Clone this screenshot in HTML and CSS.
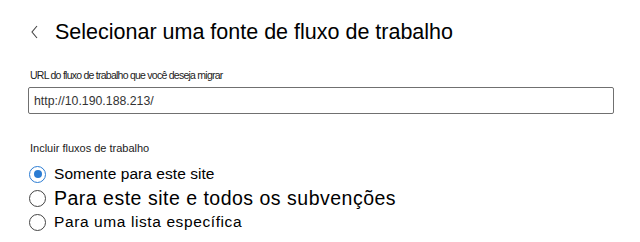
FILE: index.html
```html
<!DOCTYPE html>
<html lang="pt">

<head>
    <meta charset="UTF-8">
    <title>Selecionar uma fonte de fluxo de trabalho</title>
    <link rel="stylesheet" href="styles.css">
</head>

<body>
    <header class="page-header">
        <span class="back-icon">
            <svg width="8" height="14" viewBox="0 0 8 14">
                <path d="M6 1 L1 7 L6 13" fill="none" stroke="#444" stroke-width="1.1"/>
            </svg>
        </span>
        <h1>Selecionar uma fonte de fluxo de trabalho</h1>
    </header>

    <div class="field">
        <label class="field-label url-label" for="urlInput">URL do fluxo de trabalho que você deseja migrar</label>
        <input type="text" id="urlInput" class="url-input" value="http://10.190.188.213/">
    </div>

    <div class="field options">
        <div class="field-label group-label">Incluir fluxos de trabalho</div>
        <label class="radio-row first">
            <span class="radio checked"></span>
            <span class="radio-text">Somente para este site</span>
        </label>
        <label class="radio-row big">
            <span class="radio"></span>
            <span class="radio-text">Para este site e todos os subvenções</span>
        </label>
        <label class="radio-row wide">
            <span class="radio"></span>
            <span class="radio-text">Para uma lista específica</span>
        </label>
    </div>
</body>

</html>
```

FILE: styles.css
```css
body {
    font-family: 'Liberation Sans', Arial, sans-serif;
    margin: 0;
    padding: 0 26px 0 28px;
    background-color: #FFF;
    color: #000;
}

.page-header {
    display: flex;
    align-items: center;
    height: 30px;
    margin-top: 17px;
    padding-left: 3px;
}

.back-icon {
    display: flex;
    width: 24px;
}

.page-header h1 {
    margin: 0;
    font-size: 21.5px;
    font-weight: normal;
}

.field {
    margin-top: 22px;
}

.field-label {
    display: block;
    font-size: 11px;
    color: #222;
    margin-bottom: 6px;
    padding-left: 2px;
}

.url-label {
    font-size: 10.5px;
    letter-spacing: -0.75px;
}

.url-input {
    box-sizing: border-box;
    width: 100%;
    height: 27px;
    border: 1px solid #707070;
    border-radius: 2px;
    padding: 0 5px;
    font-family: inherit;
    font-size: 12.3px;
    color: #333;
    outline: none;
}

.options {
    margin-top: 28px;
}

.group-label {
    margin-bottom: 8px;
}

.radio-row {
    display: flex;
    align-items: center;
    height: 24px;
    padding-left: 1px;
}

.radio {
    box-sizing: border-box;
    width: 17px;
    height: 17px;
    border: 1px solid #444;
    border-radius: 50%;
    margin-right: 8px;
    flex-shrink: 0;
    position: relative;
}

.radio.checked {
    border-color: #2b7cd3;
}

.radio.checked::after {
    content: '';
    position: absolute;
    left: 3.5px;
    top: 3.5px;
    width: 8px;
    height: 8px;
    border-radius: 50%;
    background-color: #2b7cd3;
}

.radio-text {
    font-size: 15.5px;
}

.first .radio-text {
    letter-spacing: 0.05px;
}

.big .radio-text {
    font-size: 19.5px;
    letter-spacing: 0.5px;
}

.wide .radio-text {
    letter-spacing: 0.6px;
}
```
